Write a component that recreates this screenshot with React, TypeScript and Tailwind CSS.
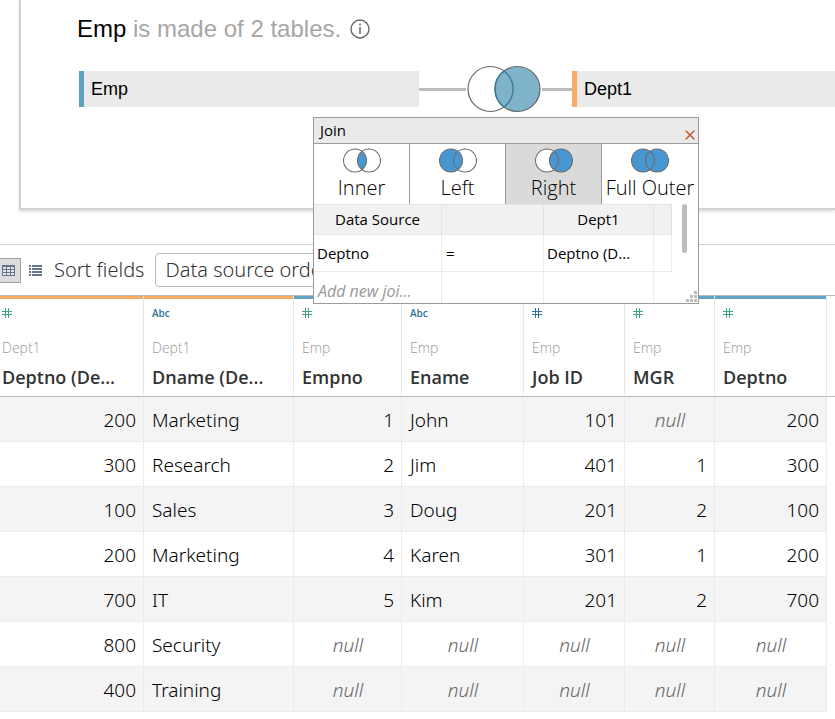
import { X } from "lucide-react";

type JoinKind = "inner" | "left" | "right" | "full";

const joinTypes: { kind: JoinKind; label: string }[] = [
  { kind: "inner", label: "Inner" },
  { kind: "left", label: "Left" },
  { kind: "right", label: "Right" },
  { kind: "full", label: "Full Outer" },
];

const columns = [
  { name: "Deptno (De...", table: "Dept1", type: "number", tone: "text-[#3fa37c]", width: "w-[144px]" },
  { name: "Dname (De...", table: "Dept1", type: "string", tone: "text-[#2f7596]", width: "w-[150px]" },
  { name: "Empno", table: "Emp", type: "number", tone: "text-[#3fa37c]", width: "w-[108px]" },
  { name: "Ename", table: "Emp", type: "string", tone: "text-[#2f7596]", width: "w-[122px]" },
  { name: "Job ID", table: "Emp", type: "number", tone: "text-[#2f7596]", width: "w-[101px]" },
  { name: "MGR", table: "Emp", type: "number", tone: "text-[#3fa37c]", width: "w-[90px]" },
  { name: "Deptno", table: "Emp", type: "number", tone: "text-[#3fa37c]", width: "w-[112px]" },
];

const rows: (string | null)[][] = [
  ["200", "Marketing", "1", "John", "101", null, "200"],
  ["300", "Research", "2", "Jim", "401", "1", "300"],
  ["100", "Sales", "3", "Doug", "201", "2", "100"],
  ["200", "Marketing", "4", "Karen", "301", "1", "200"],
  ["700", "IT", "5", "Kim", "201", "2", "700"],
  ["800", "Security", null, null, null, null, null],
  ["400", "Training", null, null, null, null, null],
];

function JoinIcon({ kind }: { kind: JoinKind }) {
  const leftFill = kind === "left" || kind === "full" ? "#4897d3" : "#fff";
  const rightFill = kind === "right" || kind === "full" ? "#4897d3" : "#fff";
  return (
    <svg width="38" height="25" viewBox="0 0 38 25" aria-hidden="true">
      <circle cx="12" cy="12.5" r="11.5" fill={leftFill} />
      <circle cx="26" cy="12.5" r="11.5" fill={rightFill} />
      {kind !== "full" && (
        <path d="M19 3.4A11.5 11.5 0 0 1 19 21.6A11.5 11.5 0 0 1 19 3.4Z" fill="#4897d3" />
      )}
      <g fill="none" stroke="#6b6b6b" strokeWidth="1.1">
        <circle cx="12" cy="12.5" r="11.5" />
        <circle cx="26" cy="12.5" r="11.5" />
      </g>
    </svg>
  );
}

function HashIcon() {
  return (
    <svg width="10" height="10" viewBox="0 0 10 10" shapeRendering="crispEdges" fill="currentColor" aria-hidden="true">
      <rect x="3" y="0" width="1" height="10" />
      <rect x="6" y="0" width="1" height="10" />
      <rect x="0" y="3" width="10" height="1" />
      <rect x="0" y="6" width="10" height="1" />
    </svg>
  );
}

function InfoIcon() {
  return (
    <svg width="20" height="20" viewBox="0 0 20 20" fill="none" stroke="#666" aria-hidden="true">
      <circle cx="10" cy="10" r="9" strokeWidth="1.4" />
      <path d="M10 8v7" strokeWidth="1.5" />
      <path d="M10 4.6v1.8" strokeWidth="1.5" />
    </svg>
  );
}

function JoinLink() {
  return (
    <button type="button" aria-label="Edit join" className="flex w-[153px] shrink-0 items-center">
      <span className="h-[3px] w-[47px] bg-[#bdbdbd]" />
      <svg width="76" height="48" viewBox="0 0 76 48" aria-hidden="true">
        <circle cx="24.5" cy="24" r="22.5" fill="#fff" stroke="#666" strokeWidth="1.2" />
        <circle cx="51.5" cy="24" r="22.5" fill="#7fb3c9" stroke="#666" strokeWidth="1.2" />
        <path
          d="M38 6A22.5 22.5 0 0 1 38 42A22.5 22.5 0 0 1 38 6Z"
          fill="none"
          stroke="#3a7a99"
          strokeWidth="1.4"
        />
      </svg>
      <span className="h-[3px] flex-1 bg-[#bdbdbd]" />
    </button>
  );
}

function JoinDialog() {
  return (
    <div
      role="dialog"
      aria-label="Join"
      className="absolute left-[313px] top-[117px] z-10 w-[386px] border border-[#9b9b9b] bg-white text-black"
    >
      <div className="flex h-[26px] items-center justify-between border-b border-[#9b9b9b] bg-[#eaeaea] pl-1.5 text-[15px]">
        <span>Join</span>
        <button type="button" aria-label="Close" className="self-end text-[#b85c2c]">
          <X size={16} strokeWidth={2} />
        </button>
      </div>
      <div className="grid h-[60px] grid-cols-4 divide-x divide-[#9b9b9b]">
        {joinTypes.map(({ kind, label }) => (
          <button
            key={kind}
            type="button"
            aria-pressed={kind === "right"}
            className={`flex flex-col items-center whitespace-nowrap pt-1 text-xl font-light leading-[30px] ${
              kind === "right" ? "bg-[#dadada]" : "bg-white"
            }`}
          >
            <JoinIcon kind={kind} />
            {label}
          </button>
        ))}
      </div>
      <div className="relative h-[99px] overflow-hidden">
        <table className="w-[358px] table-fixed border-separate border-spacing-0 text-left text-[15px]">
          <thead>
            <tr className="h-[31px] bg-[#f1f1f1] text-center">
              <th className="w-[128px] border-b border-r border-t border-[#e4e4e4] p-0 font-normal">Data Source</th>
              <th className="w-[102px] border-b border-r border-t border-[#e4e4e4] p-0" />
              <th className="w-[110px] border-b border-r border-t border-[#e4e4e4] p-0 font-normal">Dept1</th>
              <th className="border-b border-r border-t border-[#e4e4e4] p-0" />
            </tr>
          </thead>
          <tbody>
            <tr className="h-[37px]">
              <td className="border-b border-r border-[#ebebeb] p-0 pl-[3px]">Deptno</td>
              <td className="border-b border-r border-[#ebebeb] p-0 pl-1">=</td>
              <td className="border-b border-r border-[#ebebeb] p-0 pl-[3px]">Deptno (D...</td>
              <td className="border-b border-r border-[#ebebeb] p-0" />
            </tr>
            <tr className="h-[38px]">
              <td className="border-r border-[#ebebeb] p-0 pl-1 text-base italic text-[#999]">Add new joi...</td>
              <td className="border-r border-[#ebebeb] p-0" />
              <td className="border-r border-[#ebebeb] p-0" />
              <td className="p-0" />
            </tr>
          </tbody>
        </table>
        <div className="absolute right-[11px] top-0 h-[49px] w-[5px] rounded-full bg-[#bdbdbd]" />
        <svg
          className="absolute bottom-0 right-px"
          width="11"
          height="12"
          viewBox="0 0 11 12"
          shapeRendering="crispEdges"
          fill="#bbb"
          aria-hidden="true"
        >
          <path d="M8 0h3v3h-3zM4 4h3v3h-3zM8 4h3v3h-3zM0 8h3v3h-3zM4 8h3v3h-3zM8 8h3v3h-3z" />
        </svg>
      </div>
    </div>
  );
}

function Toolbar() {
  return (
    <div className="flex h-[52px] items-center border-b border-t border-b-[#bbb] border-t-[#d0d0d0] font-['Noto_Sans','Open_Sans',sans-serif] font-light text-[#333]">
      <button
        type="button"
        aria-label="Grid view"
        aria-pressed="true"
        className="flex h-[25px] w-[21px] items-center border border-l-0 border-[#a0a0a0] bg-[#dcdcdc] pl-0.5"
      >
        <svg width="13" height="11" viewBox="0 0 13 11" shapeRendering="crispEdges" fill="#e6e6e6" aria-hidden="true">
          <rect width="13" height="11" fill="#66748c" />
          <path d="M1 2h3v2h-3zM5 2h3v2h-3zM9 2h3v2h-3zM1 5h3v2h-3zM5 5h3v2h-3zM9 5h3v2h-3zM1 8h3v2h-3zM5 8h3v2h-3zM9 8h3v2h-3z" />
        </svg>
      </button>
      <button type="button" aria-label="List view" className="ml-2">
        <svg width="13" height="11" viewBox="0 0 13 11" shapeRendering="crispEdges" fill="#66748c" aria-hidden="true">
          <path d="M0 0h2v2h-2zM3 0h10v2h-10zM0 3h2v2h-2zM3 3h10v2h-10zM0 6h2v2h-2zM3 6h10v2h-10zM0 9h2v2h-2zM3 9h10v2h-10z" />
        </svg>
      </button>
      <label htmlFor="sort" className="ml-3 text-xl">
        Sort fields
      </label>
      <select
        id="sort"
        className="ml-2.5 h-[34px] w-[260px] appearance-none rounded-sm border border-[#bbb] bg-white pl-2.5 text-xl"
      >
        <option>Data source order</option>
      </select>
    </div>
  );
}

function DataGrid() {
  return (
    <table className="w-full min-w-[827px] table-fixed border-separate border-spacing-0">
      <thead>
        <tr>
          {columns.map((col, i) => (
            <th
              key={i}
              className={`border-b border-r border-b-[#bbb] border-r-[#e8e8e8] p-0 text-left align-top ${col.width}`}
            >
              <div className={`h-[3px] ${col.table === "Emp" ? "bg-[#5fa2c4]" : "bg-[#f8ac63]"}`} />
              <div className={`h-[97px] pt-[9px] ${i === 0 ? "pl-0.5" : "pl-2"}`}>
                <div className={`flex h-3 items-start text-[10px] font-semibold leading-[11px] ${col.tone}`}>
                  {col.type === "number" ? <HashIcon /> : "Abc"}
                </div>
                <div className="mt-4 text-sm font-light leading-6 text-[#999]">{col.table}</div>
                <div className="mt-[3px] text-lg font-semibold leading-7 text-[#333]">{col.name}</div>
              </div>
            </th>
          ))}
          <th className="border-b border-[#bbb] p-0" />
        </tr>
      </thead>
      <tbody className="font-['Noto_Sans','Open_Sans',sans-serif] text-[19px] font-light leading-7 text-black">
        {rows.map((row, r) => (
          <tr key={r} className="group h-[45px]">
            {row.map((value, c) => (
              <td
                key={c}
                className={`border-b border-r border-[#ebebeb] pb-0 pl-2 pr-[7px] pt-0.5 group-odd:bg-[#f4f4f4] ${
                  value === null
                    ? "text-center italic text-[#666]"
                    : columns[c].type === "number"
                      ? "text-right"
                      : "text-left"
                }`}
              >
                {value ?? "null"}
              </td>
            ))}
            <td className="p-0" />
          </tr>
        ))}
      </tbody>
    </table>
  );
}

export default function App() {
  return (
    <div className="relative min-h-screen overflow-x-hidden bg-white font-['Open_Sans','Noto_Sans',sans-serif]">
      <section className="mb-[34px] ml-[19px] h-[210px] border-b-2 border-l-2 border-[#d2d2d2] pl-14 pt-3 font-['Liberation_Sans',Arial,sans-serif] shadow-[0_2px_3px_rgba(0,0,0,0.12)]">
        <h1 className="flex h-[34px] items-center gap-[9px] text-2xl text-[#a6a6a6]">
          <span>
            <span className="text-black">Emp</span> is made of 2 tables.
          </span>
          <InfoIcon />
        </h1>
        <div className="ml-0.5 mt-[19px] flex h-12 items-center text-lg text-black">
          <div className="flex h-9 w-[340px] shrink-0 items-center border-l-[5px] border-[#5fa2c4] bg-[#eaeaea] pl-[7px]">
            Emp
          </div>
          <JoinLink />
          <div className="flex h-9 min-w-0 flex-1 items-center border-l-[5px] border-[#f8ac63] bg-[#eaeaea] pl-[7px]">
            Dept1
          </div>
        </div>
      </section>
      <Toolbar />
      <DataGrid />
      <JoinDialog />
    </div>
  );
}
